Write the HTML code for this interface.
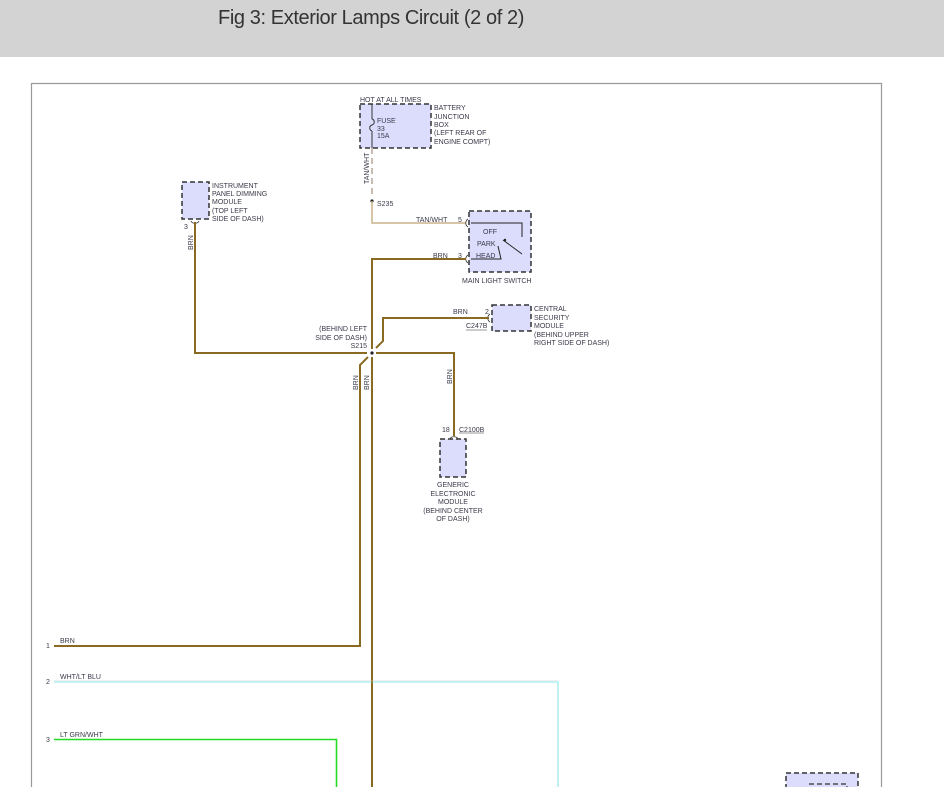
<!DOCTYPE html>
<html><head><meta charset="utf-8"><style>
html,body{margin:0;padding:0;background:#fff;width:944px;height:812px;overflow:hidden}
.hd{position:absolute;left:0;top:0;width:944px;height:57px;background:#d3d3d3}
.hd span{position:absolute;left:218px;top:7px;font:20px "Liberation Sans",sans-serif;color:#333;letter-spacing:-0.4px}
svg{position:absolute;left:0;top:0}
text{font-family:"Liberation Sans",sans-serif;font-size:7px;fill:#3a3a4a}
.b{fill:#dcdcfc;stroke:#333;stroke-width:1.5;stroke-dasharray:5,3}
</style></head><body>
<div class="hd"><span>Fig 3: Exterior Lamps Circuit (2 of 2)</span></div>
<svg width="944" height="812" viewBox="0 0 944 812">
<path d="M31.5 787V83.5H881.5V787" fill="none" stroke="#999" stroke-width="1.2"/>
<rect class="b" x="360" y="104" width="71" height="44"/>
<path d="M372 104V119 M372 131V148" stroke="#333" stroke-width="1"/>
<path d="M372 119c3 1 3 5 0 6c-3 1-3 5 0 6" fill="none" stroke="#333" stroke-width="1"/>
<text x="360" y="102">HOT AT ALL TIMES</text>
<text x="377" y="123">FUSE</text><text x="377" y="131">33</text><text x="377" y="138">15A</text>
<text x="434" y="110">BATTERY</text><text x="434" y="119">JUNCTION</text><text x="434" y="127">BOX</text><text x="434" y="135">(LEFT REAR OF</text><text x="434" y="144">ENGINE COMPT)</text>
<path d="M372 148V196" stroke="#a98" stroke-width="1.3" stroke-dasharray="6,4"/>
<text transform="translate(369,184) rotate(-90)">TAN/WHT</text>
<circle cx="372" cy="201" r="1.6" fill="#222"/>
<text x="377" y="206">S235</text>
<path d="M372 201V223H466" fill="none" stroke="#c8b48a" stroke-width="1.5"/>
<text x="416" y="222">TAN/WHT</text><text x="458" y="222">5</text>
<rect class="b" x="469" y="211" width="62" height="61"/>
<path d="M468 219c-3 2-3 6 0 8 M468 255c-3 2-3 6 0 8" fill="none" stroke="#333" stroke-width="0.8"/>
<path d="M471 223H522V237 M471 259H501L498 246 M503 240L522 254" fill="none" stroke="#222" stroke-width="1"/>
<circle cx="505" cy="240" r="1.2" fill="#222"/>
<text x="483" y="234">OFF</text><text x="477" y="246">PARK</text><text x="476" y="258">HEAD</text>
<text x="462" y="283">MAIN LIGHT SWITCH</text>
<path d="M466 259H372V349 M372 357V787" fill="none" stroke="#8a6a20" stroke-width="2"/>
<text x="433" y="258">BRN</text><text x="458" y="258">3</text>
<rect class="b" x="182" y="182" width="27" height="37"/>
<path d="M191 221c1 3 7 3 8 0" fill="none" stroke="#333" stroke-width="0.8"/>
<text x="212" y="188">INSTRUMENT</text><text x="212" y="196">PANEL DIMMING</text><text x="212" y="204">MODULE</text><text x="212" y="213">(TOP LEFT</text><text x="212" y="221">SIDE OF DASH)</text>
<text x="184" y="229">3</text>
<text transform="translate(193,250) rotate(-90)">BRN</text>
<path d="M195 222V353H367 M376 353H454V436" fill="none" stroke="#8a6a20" stroke-width="2"/>
<circle cx="372" cy="353" r="1.6" fill="#222"/>
<text x="367" y="331" text-anchor="end">(BEHIND LEFT</text><text x="367" y="340" text-anchor="end">SIDE OF DASH)</text><text x="367" y="348" text-anchor="end">S215</text>
<rect class="b" x="492" y="305" width="39" height="26"/>
<path d="M490 314c-3 2-3 6 0 8" fill="none" stroke="#333" stroke-width="0.8"/>
<path d="M489 318H383V341L376 348" fill="none" stroke="#8a6a20" stroke-width="2"/>
<text x="453" y="314">BRN</text><text x="485" y="314">2</text>
<text x="466" y="328">C247B</text>
<path d="M466 330H487" stroke="#333" stroke-width="0.5"/>
<text x="534" y="311">CENTRAL</text><text x="534" y="320">SECURITY</text><text x="534" y="328">MODULE</text><text x="534" y="337">(BEHIND UPPER</text><text x="534" y="345">RIGHT SIDE OF DASH)</text>
<text transform="translate(452,384) rotate(-90)">BRN</text>
<text x="442" y="432">18</text><text x="459" y="432">C2100B</text>
<path d="M459 433H484" stroke="#333" stroke-width="0.5"/>
<path d="M450 439c1-3 7-3 8 0" fill="none" stroke="#333" stroke-width="0.8"/>
<rect class="b" x="440" y="439" width="26" height="38"/>
<text x="453" y="487" text-anchor="middle">GENERIC</text><text x="453" y="496" text-anchor="middle">ELECTRONIC</text><text x="453" y="504" text-anchor="middle">MODULE</text><text x="453" y="513" text-anchor="middle">(BEHIND CENTER</text><text x="453" y="521" text-anchor="middle">OF DASH)</text>
<path d="M368 357L360 365V646H54" fill="none" stroke="#8a6a20" stroke-width="2"/>
<text transform="translate(358,390) rotate(-90)">BRN</text>
<text transform="translate(369,390) rotate(-90)">BRN</text>
<text x="46" y="648">1</text><text x="60" y="643">BRN</text>
<path d="M54 682H558V787" fill="none" stroke="#aeeef0" stroke-width="1.6"/>
<path d="M54 680.5H558" stroke="#eee" stroke-width="1"/>
<text x="46" y="684">2</text><text x="60" y="679">WHT/LT BLU</text>
<path d="M54 739.5H336.5V787" fill="none" stroke="#22dd22" stroke-width="1.6"/>
<text x="46" y="742">3</text><text x="60" y="737">LT GRN/WHT</text>
<path d="M372 357V787" stroke="#8a6a20" stroke-width="1.5"/>
<rect class="b" x="786" y="773" width="72" height="20"/>
<path d="M809 784H847V790" fill="none" stroke="#333" stroke-width="1.2" stroke-dasharray="5,3"/>
<rect x="0" y="787" width="944" height="25" fill="#fff"/>
</svg>
</body></html>
